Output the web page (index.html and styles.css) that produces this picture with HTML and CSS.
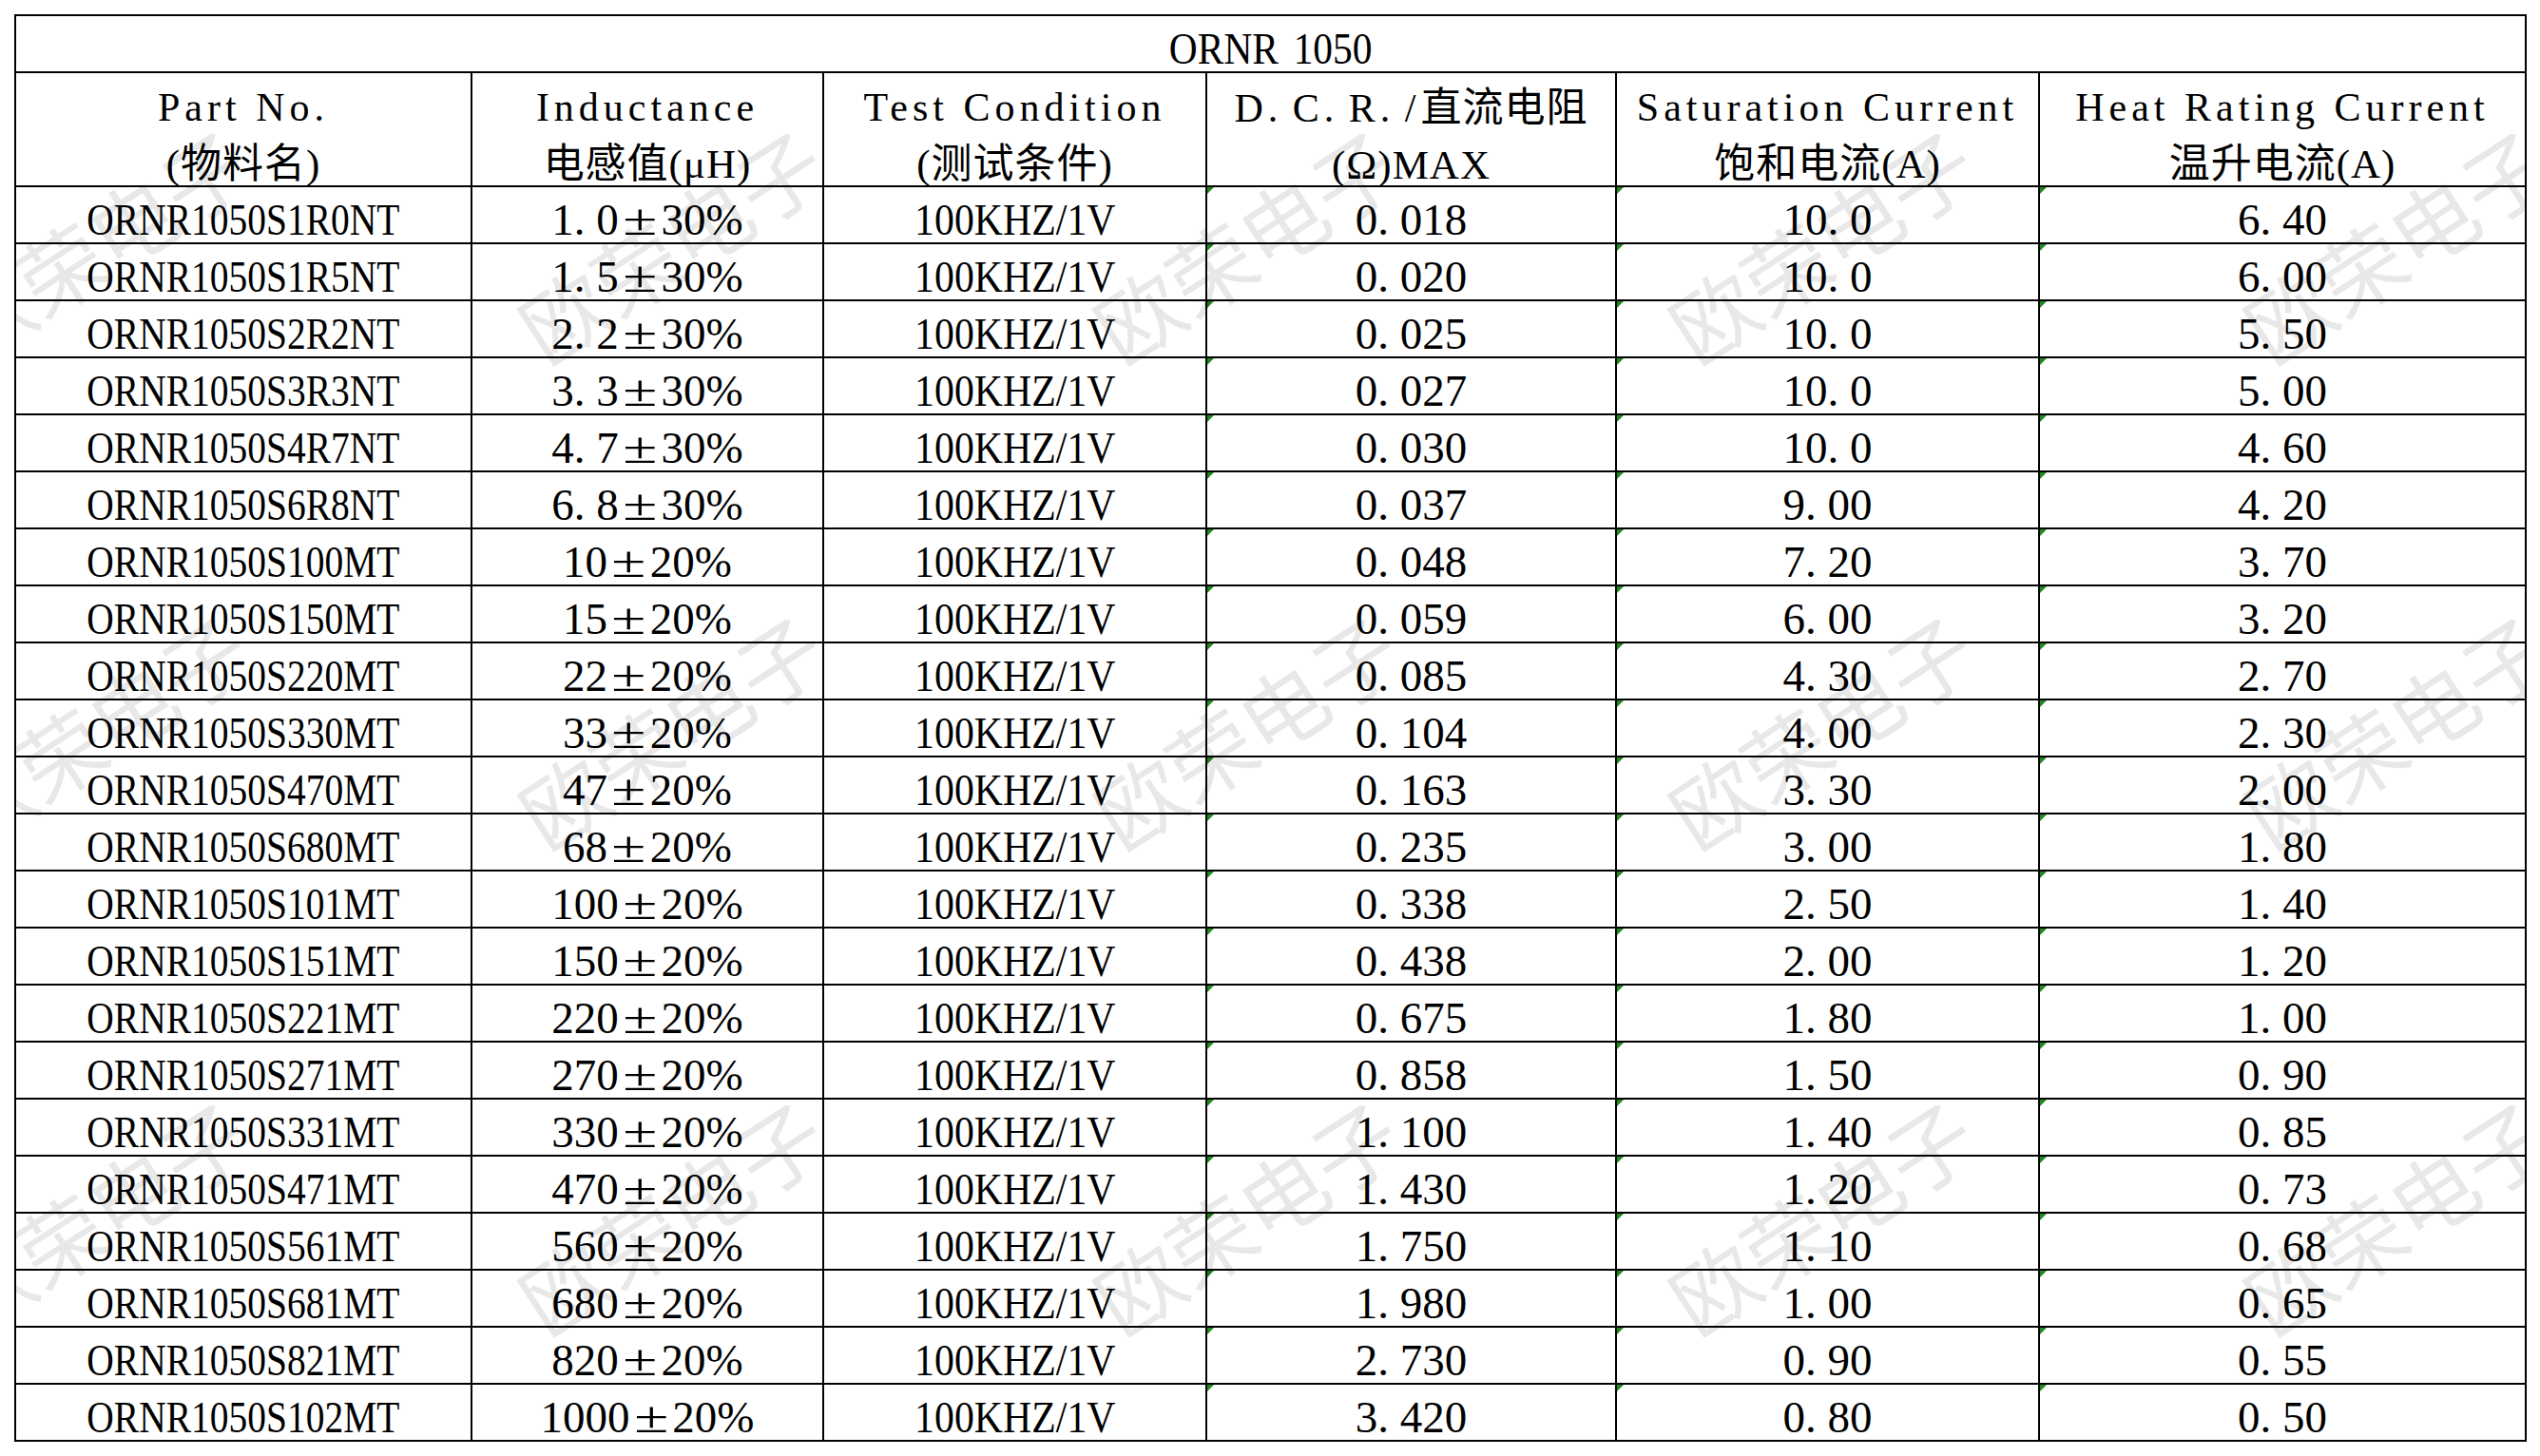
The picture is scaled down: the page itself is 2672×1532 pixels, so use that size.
FILE: index.html
```html
<!DOCTYPE html>
<html lang="zh-CN">
<head>
<meta charset="utf-8">
<title>ORNR 1050</title>
<link rel="stylesheet" href="styles.css">
</head>
<body>
<div class="sheet">
  <div class="cell title"><span class="tt">ORNR 1050</span></div>

  <div class="cell head"><span class="en">Part No.</span><br><span class="zh">(物料名)</span></div>
  <div class="cell head"><span class="en">Inductance</span><br><span class="zh">电感值(μH)</span></div>
  <div class="cell head"><span class="en">Test Condition</span><br><span class="zh">(测试条件)</span></div>
  <div class="cell head"><span class="en">D<span class="d">.</span>C<span class="d">.</span>R<span class="d">.</span>/</span><span class="zh">直流电阻</span><br><span class="zh">(Ω)MAX</span></div>
  <div class="cell head"><span class="en">Saturation Current</span><br><span class="zh">饱和电流(A)</span></div>
  <div class="cell head"><span class="en">Heat Rating Current</span><br><span class="zh">温升电流(A)</span></div>

  <div class="cell"><span class="pn">ORNR1050S1R0NT</span></div><div class="cell">1<span class="d">.</span>0<span class="pm">±</span>30%</div><div class="cell"><span class="tc">100KHZ/1V</span></div><div class="cell g">0<span class="d">.</span>018</div><div class="cell g">10<span class="d">.</span>0</div><div class="cell g">6<span class="d">.</span>40</div>
  <div class="cell"><span class="pn">ORNR1050S1R5NT</span></div><div class="cell">1<span class="d">.</span>5<span class="pm">±</span>30%</div><div class="cell"><span class="tc">100KHZ/1V</span></div><div class="cell g">0<span class="d">.</span>020</div><div class="cell g">10<span class="d">.</span>0</div><div class="cell g">6<span class="d">.</span>00</div>
  <div class="cell"><span class="pn">ORNR1050S2R2NT</span></div><div class="cell">2<span class="d">.</span>2<span class="pm">±</span>30%</div><div class="cell"><span class="tc">100KHZ/1V</span></div><div class="cell g">0<span class="d">.</span>025</div><div class="cell g">10<span class="d">.</span>0</div><div class="cell g">5<span class="d">.</span>50</div>
  <div class="cell"><span class="pn">ORNR1050S3R3NT</span></div><div class="cell">3<span class="d">.</span>3<span class="pm">±</span>30%</div><div class="cell"><span class="tc">100KHZ/1V</span></div><div class="cell g">0<span class="d">.</span>027</div><div class="cell g">10<span class="d">.</span>0</div><div class="cell g">5<span class="d">.</span>00</div>
  <div class="cell"><span class="pn">ORNR1050S4R7NT</span></div><div class="cell">4<span class="d">.</span>7<span class="pm">±</span>30%</div><div class="cell"><span class="tc">100KHZ/1V</span></div><div class="cell g">0<span class="d">.</span>030</div><div class="cell g">10<span class="d">.</span>0</div><div class="cell g">4<span class="d">.</span>60</div>
  <div class="cell"><span class="pn">ORNR1050S6R8NT</span></div><div class="cell">6<span class="d">.</span>8<span class="pm">±</span>30%</div><div class="cell"><span class="tc">100KHZ/1V</span></div><div class="cell g">0<span class="d">.</span>037</div><div class="cell g">9<span class="d">.</span>00</div><div class="cell g">4<span class="d">.</span>20</div>
  <div class="cell"><span class="pn">ORNR1050S100MT</span></div><div class="cell">10<span class="pm">±</span>20%</div><div class="cell"><span class="tc">100KHZ/1V</span></div><div class="cell g">0<span class="d">.</span>048</div><div class="cell g">7<span class="d">.</span>20</div><div class="cell g">3<span class="d">.</span>70</div>
  <div class="cell"><span class="pn">ORNR1050S150MT</span></div><div class="cell">15<span class="pm">±</span>20%</div><div class="cell"><span class="tc">100KHZ/1V</span></div><div class="cell g">0<span class="d">.</span>059</div><div class="cell g">6<span class="d">.</span>00</div><div class="cell g">3<span class="d">.</span>20</div>
  <div class="cell"><span class="pn">ORNR1050S220MT</span></div><div class="cell">22<span class="pm">±</span>20%</div><div class="cell"><span class="tc">100KHZ/1V</span></div><div class="cell g">0<span class="d">.</span>085</div><div class="cell g">4<span class="d">.</span>30</div><div class="cell g">2<span class="d">.</span>70</div>
  <div class="cell"><span class="pn">ORNR1050S330MT</span></div><div class="cell">33<span class="pm">±</span>20%</div><div class="cell"><span class="tc">100KHZ/1V</span></div><div class="cell g">0<span class="d">.</span>104</div><div class="cell g">4<span class="d">.</span>00</div><div class="cell g">2<span class="d">.</span>30</div>
  <div class="cell"><span class="pn">ORNR1050S470MT</span></div><div class="cell">47<span class="pm">±</span>20%</div><div class="cell"><span class="tc">100KHZ/1V</span></div><div class="cell g">0<span class="d">.</span>163</div><div class="cell g">3<span class="d">.</span>30</div><div class="cell g">2<span class="d">.</span>00</div>
  <div class="cell"><span class="pn">ORNR1050S680MT</span></div><div class="cell">68<span class="pm">±</span>20%</div><div class="cell"><span class="tc">100KHZ/1V</span></div><div class="cell g">0<span class="d">.</span>235</div><div class="cell g">3<span class="d">.</span>00</div><div class="cell g">1<span class="d">.</span>80</div>
  <div class="cell"><span class="pn">ORNR1050S101MT</span></div><div class="cell">100<span class="pm">±</span>20%</div><div class="cell"><span class="tc">100KHZ/1V</span></div><div class="cell g">0<span class="d">.</span>338</div><div class="cell g">2<span class="d">.</span>50</div><div class="cell g">1<span class="d">.</span>40</div>
  <div class="cell"><span class="pn">ORNR1050S151MT</span></div><div class="cell">150<span class="pm">±</span>20%</div><div class="cell"><span class="tc">100KHZ/1V</span></div><div class="cell g">0<span class="d">.</span>438</div><div class="cell g">2<span class="d">.</span>00</div><div class="cell g">1<span class="d">.</span>20</div>
  <div class="cell"><span class="pn">ORNR1050S221MT</span></div><div class="cell">220<span class="pm">±</span>20%</div><div class="cell"><span class="tc">100KHZ/1V</span></div><div class="cell g">0<span class="d">.</span>675</div><div class="cell g">1<span class="d">.</span>80</div><div class="cell g">1<span class="d">.</span>00</div>
  <div class="cell"><span class="pn">ORNR1050S271MT</span></div><div class="cell">270<span class="pm">±</span>20%</div><div class="cell"><span class="tc">100KHZ/1V</span></div><div class="cell g">0<span class="d">.</span>858</div><div class="cell g">1<span class="d">.</span>50</div><div class="cell g">0<span class="d">.</span>90</div>
  <div class="cell"><span class="pn">ORNR1050S331MT</span></div><div class="cell">330<span class="pm">±</span>20%</div><div class="cell"><span class="tc">100KHZ/1V</span></div><div class="cell g">1<span class="d">.</span>100</div><div class="cell g">1<span class="d">.</span>40</div><div class="cell g">0<span class="d">.</span>85</div>
  <div class="cell"><span class="pn">ORNR1050S471MT</span></div><div class="cell">470<span class="pm">±</span>20%</div><div class="cell"><span class="tc">100KHZ/1V</span></div><div class="cell g">1<span class="d">.</span>430</div><div class="cell g">1<span class="d">.</span>20</div><div class="cell g">0<span class="d">.</span>73</div>
  <div class="cell"><span class="pn">ORNR1050S561MT</span></div><div class="cell">560<span class="pm">±</span>20%</div><div class="cell"><span class="tc">100KHZ/1V</span></div><div class="cell g">1<span class="d">.</span>750</div><div class="cell g">1<span class="d">.</span>10</div><div class="cell g">0<span class="d">.</span>68</div>
  <div class="cell"><span class="pn">ORNR1050S681MT</span></div><div class="cell">680<span class="pm">±</span>20%</div><div class="cell"><span class="tc">100KHZ/1V</span></div><div class="cell g">1<span class="d">.</span>980</div><div class="cell g">1<span class="d">.</span>00</div><div class="cell g">0<span class="d">.</span>65</div>
  <div class="cell"><span class="pn">ORNR1050S821MT</span></div><div class="cell">820<span class="pm">±</span>20%</div><div class="cell"><span class="tc">100KHZ/1V</span></div><div class="cell g">2<span class="d">.</span>730</div><div class="cell g">0<span class="d">.</span>90</div><div class="cell g">0<span class="d">.</span>55</div>
  <div class="cell"><span class="pn">ORNR1050S102MT</span></div><div class="cell">1000<span class="pm">±</span>20%</div><div class="cell"><span class="tc">100KHZ/1V</span></div><div class="cell g">3<span class="d">.</span>420</div><div class="cell g">0<span class="d">.</span>80</div><div class="cell g">0<span class="d">.</span>50</div>

  <div class="wm-layer" aria-hidden="true">
    <div class="wm"><span>欧荣电子</span></div><div class="wm"><span>欧荣电子</span></div><div class="wm"><span>欧荣电子</span></div><div class="wm"><span>欧荣电子</span></div><div class="wm"><span>欧荣电子</span></div>
    <div class="wm"><span>欧荣电子</span></div><div class="wm"><span>欧荣电子</span></div><div class="wm"><span>欧荣电子</span></div><div class="wm"><span>欧荣电子</span></div><div class="wm"><span>欧荣电子</span></div>
    <div class="wm"><span>欧荣电子</span></div><div class="wm"><span>欧荣电子</span></div><div class="wm"><span>欧荣电子</span></div><div class="wm"><span>欧荣电子</span></div><div class="wm"><span>欧荣电子</span></div>
  </div>
</div>
</body>
</html>
```

FILE: styles.css
```css
html, body {
  margin: 0;
  padding: 0;
  background: #ffffff;
  overflow: hidden;
}

body {
  width: 2672px;
  height: 1532px;
  font-family: "Liberation Serif", "Noto Sans CJK SC", serif;
  color: #000000;
}

.sheet {
  position: relative;
  display: grid;
  width: max-content;
  margin: 15px 0 0 15px;
  grid-template-columns: 480px 370px 403px 431px 445px 512px;
  grid-template-rows: 60px 120px repeat(22, 60px);
  border-left: 2px solid #000;
  border-top: 2px solid #000;
  overflow: hidden;
}

.cell {
  position: relative;
  box-sizing: border-box;
  border-right: 2px solid #000;
  border-bottom: 2px solid #000;
  text-align: center;
  white-space: nowrap;
  font-size: 47px;
  line-height: 48px;
  padding-top: 10px;
}

.title {
  grid-column: 1 / -1;
  font-size: 46px;
  line-height: 47px;
  padding-top: 11px;
}

.tt {
  display: inline-block;
  word-spacing: 6px;
  transform: scaleX(0.9);
}

.head {
  font-size: 42px;
  line-height: 59px;
  padding-top: 7px;
}

.head .en {
  letter-spacing: 5px;
}

.head .zh {
  font-size: 43px;
  letter-spacing: 1px;
}

.pn {
  display: inline-block;
  transform: scaleX(0.84);
}

.tc {
  display: inline-block;
  transform: scaleX(0.89);
}

.d {
  margin-right: 0.25em;
}

.pm {
  display: inline-block;
  width: 0.95em;
  text-align: center;
  transform: scaleX(1.4);
}

.g::before {
  content: "";
  position: absolute;
  left: 0;
  top: 0;
  width: 0;
  height: 0;
  border-top: 7px solid #1f8a1f;
  border-right: 7px solid transparent;
}

.wm-layer {
  position: absolute;
  left: -220px;
  top: -17px;
  display: grid;
  grid-template-columns: repeat(5, 605px);
  grid-template-rows: repeat(3, 511px);
  pointer-events: none;
}

.wm {
  display: flex;
  align-items: center;
  justify-content: center;
}

.wm span {
  display: inline-block;
  transform: rotate(-33deg);
  font-family: "Noto Sans CJK SC", sans-serif;
  font-size: 90px;
  line-height: 1;
  color: rgba(0, 0, 0, 0.09);
  white-space: nowrap;
}
```
